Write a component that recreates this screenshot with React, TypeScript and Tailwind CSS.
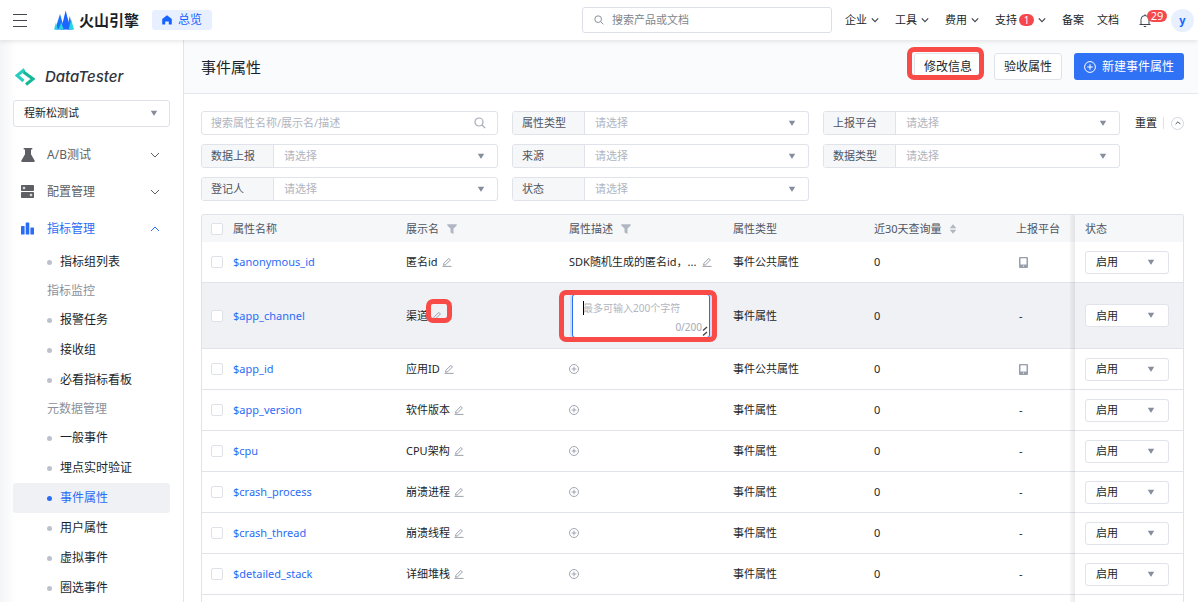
import type { ReactNode } from 'react';
import clsx from 'clsx';

type Row = {
  name: string;
  label: string;
  desc?: string;
  type: string;
  mobile?: boolean;
  editing?: boolean;
};

const rows: Row[] = [
  { name: '$anonymous_id', label: '匿名id', desc: 'SDK随机生成的匿名id，...', type: '事件公共属性', mobile: true },
  { name: '$app_channel', label: '渠道', type: '事件属性', editing: true },
  { name: '$app_id', label: '应用ID', type: '事件公共属性', mobile: true },
  { name: '$app_version', label: '软件版本', type: '事件属性' },
  { name: '$cpu', label: 'CPU架构', type: '事件属性' },
  { name: '$crash_process', label: '崩溃进程', type: '事件属性' },
  { name: '$crash_thread', label: '崩溃线程', type: '事件属性' },
  { name: '$detailed_stack', label: '详细堆栈', type: '事件属性' },
];

const subMenu = [
  { text: '指标组列表' },
  { text: '指标监控', group: true },
  { text: '报警任务' },
  { text: '接收组' },
  { text: '必看指标看板' },
  { text: '元数据管理', group: true },
  { text: '一般事件' },
  { text: '埋点实时验证' },
  { text: '事件属性', active: true },
  { text: '用户属性' },
  { text: '虚拟事件' },
  { text: '圈选事件' },
];

const filters = ['属性类型', '上报平台', '数据上报', '来源', '数据类型', '登记人', '状态'];

/* ---------- icons ---------- */

function Chevron({ up, className }: { up?: boolean; className?: string }) {
  return (
    <svg viewBox="0 0 10 10" className={clsx('shrink-0', className)} fill="none" stroke="currentColor">
      <path d={up ? 'M1 7l4-4 4 4' : 'M1 3l4 4 4-4'} />
    </svg>
  );
}

function Caret({ className }: { className?: string }) {
  return (
    <svg viewBox="0 0 8 6" className={clsx('pointer-events-none absolute h-[6px] w-[8px] text-[#868d9c]', className)} fill="currentColor">
      <path d="M0.8 0.8h6.4L4.6 4.9a0.7 0.7 0 0 1-1.2 0z" />
    </svg>
  );
}

function SearchIcon({ className }: { className?: string }) {
  return (
    <svg viewBox="0 0 12 12" className={className} fill="none" stroke="currentColor" strokeWidth="1.2">
      <circle cx="5" cy="5" r="4" />
      <path d="M8 8l3.2 3.2" />
    </svg>
  );
}

function PencilIcon() {
  return (
    <svg viewBox="0 0 10 10" className="size-[10px] shrink-0 text-[#8f95a3]" fill="none" stroke="currentColor" strokeWidth="0.9">
      <path d="M1.5 8.2l0.5-2L6.8 1.4l1.6 1.6L3.6 7.8z" strokeLinejoin="round" />
      <path d="M0.5 9.4h9" />
    </svg>
  );
}

function PlusCircle({ className }: { className?: string }) {
  return (
    <svg viewBox="0 0 12 12" className={clsx('shrink-0', className)} fill="none" stroke="currentColor">
      <circle cx="6" cy="6" r="5.4" />
      <path d="M6 3.2v5.6M3.2 6h5.6" />
    </svg>
  );
}

function FilterIcon() {
  return (
    <svg viewBox="0 0 10 10" className="size-[10px]" fill="#b1b6c3">
      <path d="M0.3 0.3h9.4v1.2L6.5 4.6V10L3.5 8.6v-4L0.3 1.5z" />
    </svg>
  );
}

function SortIcon() {
  return (
    <svg viewBox="0 0 8 10" className="h-[10px] w-[8px]" fill="#b1b6c3">
      <path d="M4 0.3l3.3 3.9H0.7zM4 9.7l3.3-3.9H0.7z" />
    </svg>
  );
}

function PhoneIcon() {
  return (
    <svg viewBox="0 0 9 11" className="h-[11px] w-[9px]">
      <rect width="9" height="11" rx="1" fill="#989fab" />
      <rect x="1.5" y="1.3" width="6" height="6.2" fill="#fff" />
      <rect x="4" y="8.6" width="1" height="1" fill="#fff" />
    </svg>
  );
}

function FlaskIcon() {
  return (
    <svg viewBox="0 0 14 14" className="size-[14px]" fill="currentColor">
      <path d="M2.7 0h8.6v1.6H10v4.6l3.6 6.3c0.4 0.8 0 1.5-0.9 1.5H1.3c-0.9 0-1.3-0.7-0.9-1.5L4 6.2V1.6H2.7z" />
    </svg>
  );
}

function ServerIcon() {
  return (
    <svg viewBox="0 0 13 13" className="size-[13px]">
      <rect width="13" height="6" rx="0.8" fill="currentColor" />
      <rect y="7" width="13" height="6" rx="0.8" fill="currentColor" />
      <path d="M3 1.7v2.6M1.7 3h2.6M10 8.7v2.6M8.7 10h2.6" stroke="#fff" />
    </svg>
  );
}

function BarsIcon() {
  return (
    <svg viewBox="0 0 13 13" className="size-[13px]" fill="currentColor">
      <rect y="4" width="3.6" height="8.5" rx="0.6" />
      <rect x="4.7" y="0.5" width="3.6" height="12" rx="0.6" />
      <rect x="9.4" y="5.5" width="3.6" height="7" rx="0.6" />
    </svg>
  );
}

/* red frame that points out a part of the page */
function Highlight({ className }: { className: string }) {
  return <span className={clsx('pointer-events-none absolute z-10 rounded-[7px] border-5 border-[#f84b48]', className)} />;
}

/* ---------- parts ---------- */

function NavItem({ children, arrow }: { children: ReactNode; arrow?: boolean }) {
  return (
    <a href="#" className="flex items-center gap-1">
      {children}
      {arrow && <Chevron className="size-2 text-[#41464f] [stroke-width:1.5]" />}
    </a>
  );
}

function TopBar() {
  return (
    <header className="relative z-20 flex h-10 shrink-0 items-center bg-white pl-[13px] pr-1 text-[11px] shadow-[0_1px_5px_rgba(0,0,0,0.12)]">
      <button aria-label="菜单" className="flex h-[13px] w-[14px] flex-col justify-between">
        <span className="h-px w-full bg-[#41464f]" />
        <span className="h-px w-full bg-[#41464f]" />
        <span className="h-px w-full bg-[#41464f]" />
      </button>

      <a href="#" className="ml-[27px] flex items-center gap-[5px] text-[15px] font-bold">
        <svg viewBox="0 0 20 20" className="size-5">
          <path d="M6 4l4.500 15.500H1.200z" fill="#1a74ff" />
          <path d="M15.800 6l3 13.500h-6z" fill="#1a74ff" />
          <path d="M11.700 0.500L16.500 19.500H7z" fill="#1a66ff" />
          <path d="M2 12.500l1.800 7H0z" fill="#2ad5de" />
          <path d="M7.200 12.500L9.800 19.500H4.600z" fill="#2ad5de" />
          <path d="M17.200 9.500L20 19.500h-5.400z" fill="#2ad5de" />
        </svg>
        火山引擎
      </a>

      <a href="#" className="ml-[13px] flex h-5 items-center gap-1.5 rounded-[3px] bg-[#e8f0ff] px-2.5 text-xs text-[#1664ff]">
        <svg viewBox="0 0 10 10" className="size-[10px]" fill="currentColor">
          <path d="M5 0.3l4.5 3.5c0.2 0.2 0.3 0.4 0.3 0.6v5.2H6.8V6.5H3.2v3.1H0.2V4.4c0-0.2 0.1-0.4 0.3-0.6z" />
        </svg>
        总览
      </a>

      <label className="ml-auto flex h-[26px] w-[250px] items-center gap-2 rounded-[3px] border border-[#dcdfe8] px-[11px] text-[#8b8f99]">
        <SearchIcon className="size-[10px] shrink-0" />
        <input aria-label="搜索产品或文档" placeholder="搜索产品或文档" className="w-full outline-none placeholder:text-[#80848e]" />
      </label>

      <nav className="ml-[13px] flex items-center gap-4">
        <NavItem arrow>企业</NavItem>
        <NavItem arrow>工具</NavItem>
        <NavItem arrow>费用</NavItem>
        <NavItem arrow>
          支持
          <span className="-ml-0.5 flex h-3 w-[15px] items-center justify-center rounded-full bg-[#f5484d] text-[10px] text-white">1</span>
        </NavItem>
      </nav>
      <nav className="ml-4 flex items-center gap-[13px]">
        <NavItem>备案</NavItem>
        <NavItem>文档</NavItem>
      </nav>

      <button aria-label="消息" className="relative ml-5">
        <svg viewBox="0 0 12 13" className="h-[13px] w-3" fill="none" stroke="#41464f">
          <path d="M0.5 10.5h11M2 10.5V5.5a4 4 0 0 1 8 0v5M4.8 12.5h2.4M6 0.3v1.2" />
        </svg>
        <span className="absolute -top-1 left-2 flex h-3 w-5 items-center justify-center rounded-full bg-[#f5484d] text-[11px] text-white">29</span>
      </button>
      <a href="#" className="ml-5 flex size-[23px] items-center justify-center rounded-full bg-[#e8f0ff] text-[11px] font-bold text-[#1664ff]">
        y
      </a>
    </header>
  );
}

function MenuItem({ icon, children, open }: { icon: ReactNode; children: ReactNode; open?: boolean }) {
  return (
    <a href="#" className={clsx('flex h-[37px] items-center pl-2 pr-[10px]', open ? 'text-[#2b6cf5]' : 'text-[#5d5f64]')}>
      <span className="flex w-[26px] items-center">{icon}</span>
      {children}
      <Chevron up={open} className="ml-auto size-[10px]" />
    </a>
  );
}

function Sidebar() {
  return (
    <aside className="w-[184px] shrink-0 overflow-hidden border-r border-[#e1e4ea] bg-linear-to-r from-[#f4f5f7] to-white to-[16px] px-[13px] pt-[13px] text-xs">
      <div className="flex h-[47px] items-center gap-2.5 pl-0.5">
        <svg viewBox="0 0 20 18" className="h-[18px] w-5" fill="none" strokeWidth="3">
          <path d="M9.5 1.5L2 7.5l6.5 5.5" stroke="#25cfc0" />
          <path d="M8.5 4l9.5 7-7 5.5" stroke="#13b795" />
        </svg>
        <span className="font-[Inter] text-[15px] font-medium text-[#30343d] italic">DataTester</span>
      </div>

      <div className="relative">
        <select aria-label="项目" className="h-[27px] w-full appearance-none rounded-[3px] border border-[#dfe2e9] bg-white px-2.5 text-[11px]">
          <option>程新松测试</option>
        </select>
        <Caret className="top-[10px] right-3" />
      </div>

      <nav className="mt-[9px]">
        <MenuItem icon={<FlaskIcon />}>A/B测试</MenuItem>
        <MenuItem icon={<ServerIcon />}>配置管理</MenuItem>
        <MenuItem icon={<BarsIcon />} open>
          指标管理
        </MenuItem>
        {subMenu.map((item) =>
          item.group ? (
            <div key={item.text} className="flex h-7 items-center pl-[34px] text-[#8c919b]">
              {item.text}
            </div>
          ) : (
            <a
              key={item.text}
              href="#"
              className={clsx('flex h-[30px] items-center gap-2 rounded-[3px] pl-[34px]', item.active && 'bg-[#f0f1f5] text-[#2b6cf5]')}
            >
              <span className={clsx('size-[5px] rounded-full', item.active ? 'bg-[#2b6cf5]' : 'bg-[#bdc1cd]')} />
              {item.text}
            </a>
          ),
        )}
      </nav>
    </aside>
  );
}

function FilterSelect({ label }: { label: string }) {
  return (
    <label className="relative flex h-6 items-center overflow-hidden rounded-[3px] border border-[#e1e3ea]">
      <span className="flex h-full w-[72px] shrink-0 items-center border-r border-[#e1e3ea] bg-[#f6f7f9] pl-[9px] text-[#4e5563]">{label}</span>
      <select className="h-full w-full appearance-none pl-[10px] text-[#b1b5c0] outline-none">
        <option>请选择</option>
      </select>
      <Caret className="right-3" />
    </label>
  );
}

function Filters() {
  return (
    <div className="flex items-start gap-[15px]">
      <div className="grid flex-1 grid-cols-3 gap-x-[14px] gap-y-[9px]">
        <label className="flex h-6 items-center rounded-[3px] border border-[#e1e3ea] pr-[11px] pl-[9px]">
          <input aria-label="搜索属性" placeholder="搜索属性名称/展示名/描述" className="w-full outline-none placeholder:text-[#b1b5c0]" />
          <SearchIcon className="size-3 shrink-0 text-[#a5aab7]" />
        </label>
        {filters.map((label) => (
          <FilterSelect key={label} label={label} />
        ))}
      </div>
      <div className="flex h-6 items-center">
        <button>重置</button>
        <span className="mr-[7px] ml-1.5 h-3 w-px bg-[#dfe2e9]" />
        <button aria-label="收起" className="flex size-[13px] items-center justify-center rounded-full border border-[#d4d7df]">
          <Chevron up className="size-[6px] text-[#41464f] [stroke-width:1.5]" />
        </button>
      </div>
    </div>
  );
}

function CheckBox({ label }: { label: string }) {
  return <input type="checkbox" aria-label={label} className="block size-3 appearance-none rounded-[2px] border border-[#dfe1e8] bg-white" />;
}

function DescEditor() {
  return (
    <div className="relative ml-[3px] h-[44px] w-[138px]">
      <textarea
        aria-label="属性描述"
        placeholder="最多可输入200个字符"
        className="block h-full w-full resize-none rounded-[3px] border border-[#2b6cf5] bg-white px-2.5 pt-[6px] text-[10px] leading-[14px] shadow-[0_0_0_2px_#cddcfb] outline-none placeholder:text-[#b1b5c0]"
      />
      <span className="absolute top-[7px] left-[11px] h-[14px] w-px bg-black" />
      <span className="absolute right-2 bottom-1 text-[10px] leading-[14px] text-[#a5aab7]">0/200</span>
      <svg viewBox="0 0 6 10" className="absolute right-[2px] bottom-[2px] h-[10px] w-[6px]" stroke="#444" strokeWidth="1.3">
        <path d="M1 4.5l4-3.5M1 9.5l4-3.5" />
      </svg>
      <Highlight className="-top-1 -right-[7px] -bottom-1 -left-[13px]" />
    </div>
  );
}

function PropertyTable() {
  return (
    <div className="relative mt-[13px] flex-1 overflow-hidden rounded-t-[3px] border border-b-0 border-[#e1e3ea]">
      <table className="w-full table-fixed border-separate border-spacing-0 text-left">
        <colgroup>
          <col className="w-[21px]" />
          <col className="w-[173px]" />
          <col className="w-[163px]" />
          <col className="w-[164px]" />
          <col className="w-[141px]" />
          <col className="w-[142px]" />
          <col />
          <col className="w-[108px]" />
        </colgroup>
        <thead>
          <tr className="h-[27px] bg-[#f6f7f9] text-[#4e5563] *:p-0 *:pl-2.5 *:font-normal">
            <th className="pl-[9px]!">
              <CheckBox label="全选" />
            </th>
            <th>属性名称</th>
            <th>
              <span className="flex items-center gap-2">
                展示名 <FilterIcon />
              </span>
            </th>
            <th>
              <span className="flex items-center gap-2">
                属性描述 <FilterIcon />
              </span>
            </th>
            <th>属性类型</th>
            <th>
              <span className="flex items-center gap-[7px]">
                近30天查询量 <SortIcon />
              </span>
            </th>
            <th>上报平台</th>
            <th>状态</th>
          </tr>
        </thead>
        <tbody>
          {rows.map((row) => (
            <tr
              key={row.name}
              className={clsx(
                '*:border-b *:border-[#e1e3ea] *:p-0 *:pl-2.5 *:whitespace-nowrap',
                row.editing ? 'h-[66px] bg-[#f0f1f5]' : 'h-[41px]',
              )}
            >
              <td className="pl-[9px]!">
                <CheckBox label={row.name} />
              </td>
              <td>
                <a href="#" className="text-[#2b6cf5]">
                  {row.name}
                </a>
              </td>
              <td>
                <div className="flex items-center gap-1">
                  {row.label}
                  <button aria-label="编辑展示名" className="relative">
                    <PencilIcon />
                    {row.editing && <Highlight className="-top-3 -right-[10px] -bottom-[2px] -left-[6px]" />}
                  </button>
                </div>
              </td>
              <td>
                {row.editing && <DescEditor />}
                {row.desc && (
                  <div className="flex items-center gap-1.5">
                    {row.desc}
                    <button aria-label="编辑描述">
                      <PencilIcon />
                    </button>
                  </div>
                )}
                {!row.editing && !row.desc && (
                  <button aria-label="添加描述" className="block text-[#8f95a3]">
                    <PlusCircle className="size-[10px]" />
                  </button>
                )}
              </td>
              <td>{row.type}</td>
              <td>0</td>
              <td>
                <div className="pl-[3px]">{row.mobile ? <PhoneIcon /> : '-'}</div>
              </td>
              <td>
                <div className="relative h-[23px] w-[84px]">
                  <select aria-label="状态" className="h-full w-full appearance-none rounded-[3px] border border-[#e1e3ea] bg-white pl-2.5">
                    <option>启用</option>
                  </select>
                  <Caret className="top-2 right-[14px]" />
                </div>
              </td>
            </tr>
          ))}
        </tbody>
      </table>
      {/* shade at the edge of the fixed column */}
      <div className="pointer-events-none absolute inset-y-0 right-[108px] w-[5px] bg-linear-to-r from-black/3 to-black/8" />
    </div>
  );
}

export default function App() {
  return (
    <div className="flex h-screen flex-col overflow-hidden bg-white font-['Noto_Sans','Noto_Sans_CJK_SC',sans-serif] text-[11px] leading-4 text-[#1b1f29]">
      <TopBar />
      <div className="flex min-h-0 flex-1">
        <Sidebar />
        <main className="flex min-w-0 flex-1 flex-col">
          <div className="flex h-[54px] shrink-0 items-center gap-3 border-b border-[#e4e7ee] bg-[#fafbfd] pr-[14px] pl-[17px] text-xs">
            <h1 className="mr-auto text-[15px]">事件属性</h1>
            <button className="relative h-[27px] rounded-[3px] border border-[#e1e3ea] bg-white px-[9px]">
              修改信息
              <Highlight className="-top-[7px] -right-[3px] -bottom-px -left-2" />
            </button>
            <button className="h-[27px] rounded-[3px] border border-[#e1e3ea] bg-white px-[9px]">验收属性</button>
            <button className="flex h-[27px] items-center gap-1.5 rounded-[3px] bg-[#3072f6] px-2.5 text-white">
              <PlusCircle className="size-3" />
              新建事件属性
            </button>
          </div>
          <div className="flex min-h-0 flex-1 flex-col pt-[17px] pr-[14px] pl-[17px]">
            <Filters />
            <PropertyTable />
          </div>
        </main>
      </div>
    </div>
  );
}
